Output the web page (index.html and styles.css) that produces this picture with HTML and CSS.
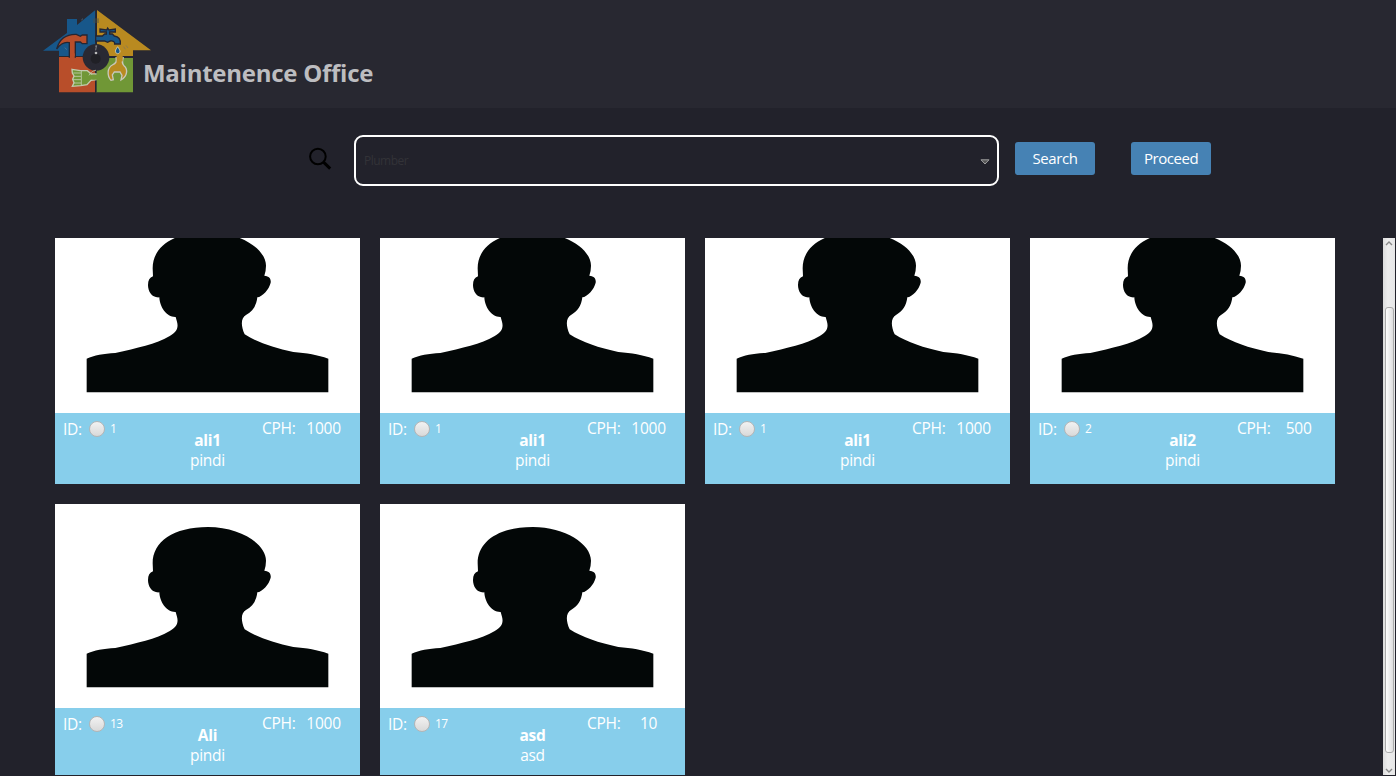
FILE: index.html
```html
<!DOCTYPE html>
<html lang="en">
<head>
<meta charset="utf-8">
<title>Maintenence Office</title>
<link rel="stylesheet" href="styles.css">
</head>
<body>
<svg class="defs" width="0" height="0" aria-hidden="true">
  <symbol id="person" viewBox="15 12 915 612">
    <path fill="#030707" d="M110 461C133 451 160 446 196 444C260 430 319 417 358 394C380 381 386 370 381 350L377 336C350 337 329 306 328 277C306 279 294 260 294 240C294 226 299 218 309 214L308 190C308 125 370 81 474 81C570 81 648 132 648 182Q648 197 643 212C655 213 664 219 662 233C657 254 637 275 622 277C619 303 607 320 589 329C572 337 572 363 584 388C622 412 672 429 730 441C770 444 803 450 835 461V562H110Z"/>
  </symbol>
</svg>
<header class="header">
  <svg class="logo" viewBox="0 0 390 330" width="130" height="110">
    <path fill="#17578a" d="M39 152L111 99V57H141V75L196 30V168H87V152Z"/>
    <path fill="#b98a20" d="M201 30L363 151H309V168H201Z"/>
    <path fill="#b84e2a" d="M87 171H195V277H87Z"/>
    <path fill="#709736" d="M198 174H309V277H198Z"/>
    <path fill="none" stroke="#242633" stroke-width="4" d="M198 30V277M237 171H309"/>
    <path fill="#b84e2a" stroke="#242633" stroke-width="4" d="M80 147C88 117 105 102 139 103L151 109L157 105H171V131H157L151 126H136V171H118V128C105 125 91 132 80 147Z"/>
    <path fill="#b84e2a" d="M120 160H134V185H120Z"/>
    <path fill="#17578a" stroke="#242633" stroke-width="4" d="M197 108H217L224 102H229V96H210V87L230 90L233 84L237 90L256 87V96H239V102H247L253 108C266 110 272 120 271 132H254C255 125 249 122 241 123L233 127L223 123H197Z"/>
    <path fill="#17578a" stroke="#ddd5b4" stroke-width="2.5" d="M263 140C257 149 255 152 257 157C261 163 267 162 270 156C271 151 267 147 263 140Z"/>
    <circle cx="198" cy="172" r="40" fill="#292933"/>
    <circle cx="197" cy="176" r="15" fill="#202026"/>
    <circle cx="198" cy="159" r="4" fill="#bbb"/>
    <path fill="none" stroke="#aaa" stroke-width="2" d="M195 139L200 137L198 144L197 151"/>
    <path fill="#b98a20" stroke="#c9c8bc" stroke-width="4" d="M258 171C261 185 258 190 247 195C232 203 230 227 243 241L250 239L247 225L253 216H270L276 226L273 240C293 229 294 207 282 197C274 190 277 182 280 171"/>
    <path fill="#b98a20" d="M260 168H278V184H260Z"/>
    <path fill="#709736" stroke="#c2ccae" stroke-width="4" d="M126 208L151 212H172L184 222H198V239L183 241L171 254L152 257L127 259L132 248L128 238L132 228L127 219Z"/>
    <path fill="none" stroke="#c2ccae" stroke-width="2.5" d="M154 212V256M130 219H153M132 229H153M129 239H153M132 249H153M177 226C184 215 191 211 198 211"/>
    <path fill="#709736" d="M187 224H208V239H187Z"/>
    <path fill="none" stroke="#5c7990" stroke-width="2" d="M104 143l7 6M154 60l5-4"/>
    <path fill="none" stroke="#7e7460" stroke-width="2" d="M281 140l5 8M288 136l6 8"/>
    <path fill="#4d5147" opacity=".45" d="M189 55h18v14h-18z"/>
  </svg>
  <h1 class="title">Maintenence Office</h1>
</header>
<section class="toolbar">
  <svg class="search-icon" viewBox="0 0 24 24" width="24" height="24"><circle cx="9.9" cy="9.5" r="7.8" fill="none" stroke="#000" stroke-width="2"/><path d="M15.5 15.2L22.2 21.7" stroke="#000" stroke-width="3"/></svg>
  <div class="select"><span>Plumber</span><svg viewBox="0 0 10 6" width="10" height="6"><path d="M1 .8H9L5 5Z" fill="#555" stroke="#aaa" stroke-width=".9"/></svg></div>
  <button class="button">Search</button>
  <button class="button proceed">Proceed</button>
</section>
<main class="viewport">
  <div class="grid">
    <article class="card"><svg class="photo"><use href="#person"/></svg><div class="info"><div class="id"><span>ID:</span><i class="radio"></i><small>1</small></div><div class="who"><b>ali1</b><span>pindi</span></div><div class="rate"><span>CPH:</span><span class="cost">1000</span></div></div></article>
    <article class="card"><svg class="photo"><use href="#person"/></svg><div class="info"><div class="id"><span>ID:</span><i class="radio"></i><small>1</small></div><div class="who"><b>ali1</b><span>pindi</span></div><div class="rate"><span>CPH:</span><span class="cost">1000</span></div></div></article>
    <article class="card"><svg class="photo"><use href="#person"/></svg><div class="info"><div class="id"><span>ID:</span><i class="radio"></i><small>1</small></div><div class="who"><b>ali1</b><span>pindi</span></div><div class="rate"><span>CPH:</span><span class="cost">1000</span></div></div></article>
    <article class="card"><svg class="photo"><use href="#person"/></svg><div class="info"><div class="id"><span>ID:</span><i class="radio"></i><small>2</small></div><div class="who"><b>ali2</b><span>pindi</span></div><div class="rate"><span>CPH:</span><span class="cost">500</span></div></div></article>
    <article class="card"><svg class="photo"><use href="#person"/></svg><div class="info"><div class="id"><span>ID:</span><i class="radio"></i><small>13</small></div><div class="who"><b>Ali</b><span>pindi</span></div><div class="rate"><span>CPH:</span><span class="cost">1000</span></div></div></article>
    <article class="card"><svg class="photo"><use href="#person"/></svg><div class="info"><div class="id"><span>ID:</span><i class="radio"></i><small>17</small></div><div class="who"><b>asd</b><span>asd</span></div><div class="rate"><span>CPH:</span><span class="cost">10</span></div></div></article>
  </div>
  <div class="scrollbar">
    <svg viewBox="0 0 8 5" width="8" height="5"><path d="M1 4L4 1L7 4" fill="none" stroke="#888" stroke-width="1.4"/></svg>
    <div class="thumb"></div>
    <svg viewBox="0 0 8 5" width="8" height="5"><path d="M1 1L4 4L7 1" fill="none" stroke="#888" stroke-width="1.4"/></svg>
  </div>
</main>
</body>
</html>
```
FILE: styles.css
```css
* { box-sizing: border-box; }
body {
  margin: 0;
  height: 776px;
  overflow: hidden;
  background: #22222b;
  color: #fff;
  font: 15.5px/20px "Open Sans", "Noto Sans", sans-serif;
  letter-spacing: -0.25px;
}
.defs { position: absolute; }
.header {
  display: flex;
  height: 108px;
  padding-left: 30px;
  background: #282831;
  overflow: hidden;
}
.logo { flex: none; }
.title {
  margin: 56px 0 0 -17px;
  color: #bdbdc0;
  font-size: 24px;
  line-height: 34px;
  font-weight: 700;
  letter-spacing: -0.26px;
  white-space: nowrap;
}
.toolbar {
  display: flex;
  align-items: flex-start;
  height: 130px;
  padding: 27px 0 0 308px;
}
.search-icon { margin-top: 12px; }
.select {
  display: flex;
  align-items: center;
  justify-content: space-between;
  width: 645px;
  height: 51px;
  margin-left: 22px;
  padding: 1px 7px 0 8px;
  border: 2px solid #fff;
  border-radius: 9px;
  color: #333338;
  font-size: 12px;
  letter-spacing: -0.5px;
}
.select svg { margin-top: 2px; }
.button {
  width: 80px;
  height: 33px;
  margin: 7px 0 0 16px;
  padding: 0;
  border: 0;
  border-radius: 3px;
  background: #4682b4;
  color: #fff;
  font: 15px/33px "Open Sans", "Noto Sans", sans-serif;
  letter-spacing: -0.45px;
}
.proceed { margin-left: 36px; }
.viewport {
  display: flex;
  justify-content: space-between;
  height: 537px;
  padding: 0 1px 0 55px;
  overflow: hidden;
}
.grid {
  display: grid;
  grid-template-columns: repeat(4, 305px);
  grid-auto-rows: 275px;
  gap: 20px;
  margin-top: -29px;
}
.card { background: #87ceeb; }
.photo { display: block; width: 305px; height: 204px; background: #fff; }
.info {
  display: grid;
  grid-template-columns: 105px 95px 105px;
  height: 71px;
}
.id { display: flex; align-items: center; height: 20px; margin: 6px 0 0 8px; }
.radio {
  width: 16px;
  height: 16px;
  margin: 0 5px 0 7px;
  border: 1px solid #b5b5b5;
  border-radius: 50%;
  background: linear-gradient(#f2f2f2, #d9d9d9);
}
.id small { font-size: 12px; letter-spacing: -0.5px; }
.who { display: flex; flex-direction: column; align-items: center; padding-top: 17px; }
.who b { font-size: 15.5px; }
.rate { display: flex; height: 20px; margin: 5px 0 0 7px; }
.cost { width: 56px; text-align: center; }
.scrollbar {
  display: flex;
  flex-direction: column;
  align-items: center;
  width: 12px;
  padding: 3px 0 2px;
  background: linear-gradient(90deg, #dcdcdc, #ededed 40%, #e6e6e6);
}
.thumb {
  width: 9px;
  height: 446px;
  margin: 61px 0 auto;
  border: 1px solid #aaa;
  border-radius: 3px;
  background: linear-gradient(90deg, #fff, #dedede);
}
```
